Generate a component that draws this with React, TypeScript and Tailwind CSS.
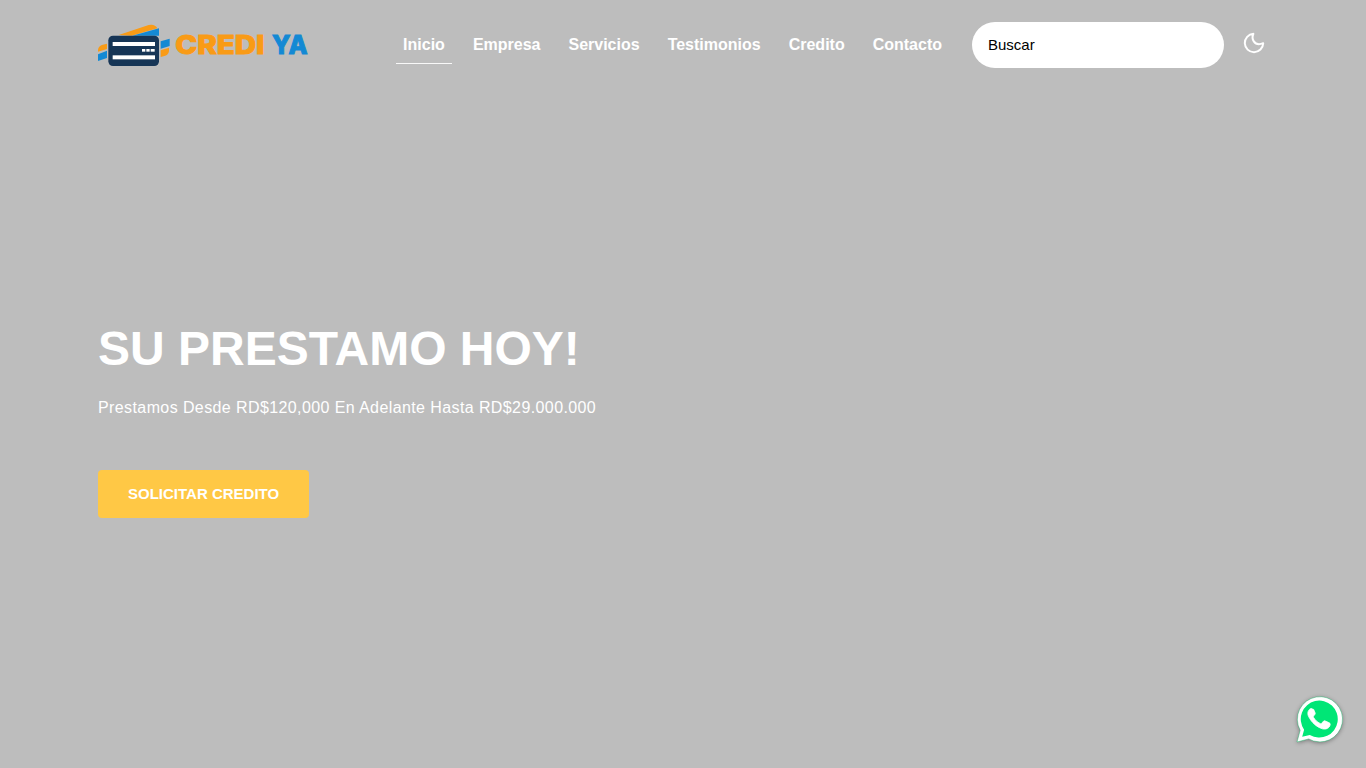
const links = ["Inicio", "Empresa", "Servicios", "Testimonios", "Credito", "Contacto"];

function Logo() {
  return (
    <svg className="w-[220px] h-[43px] shrink-0 overflow-visible" viewBox="24 27 660 129" role="img" aria-label="Credi Ya">
      <g fill="#f99b16">
        <path d="M86 60 L176 30 Q195 26 202 40 L125 62 Z" />
        <path d="M24 110 V104 Q25 93 38 89 L51 86 V102 Z" />
        <path d="M212 106 L237 98 Q239 118 226 122 L212 126 Z" />
      </g>
      <g fill="#1389d4">
        <path d="M127 62 L207 40 V62 Z" />
        <path d="M24 118 L51 107 V129 L24 138 Z" />
        <path d="M212 79 L239 71 V93 L212 101 Z" />
      </g>
      <rect x="55" y="62" width="152" height="91" rx="14" fill="#163556" />
      <g fill="#fff">
        <rect x="68" y="81" width="127" height="12" />
        <rect x="68" y="121" width="127" height="12" />
        <rect x="156" y="102" width="10" height="8" />
        <rect x="169" y="102" width="10" height="8" />
        <rect x="182" y="102" width="12" height="8" />
      </g>
      <g className="font-['Inter',sans-serif] font-extrabold" fontSize="77" strokeWidth="3">
        <text x="256" y="118" textLength="267" lengthAdjust="spacingAndGlyphs" fill="#f99b16" stroke="#f99b16">
          CREDI
        </text>
        <text x="546" y="118" textLength="107" lengthAdjust="spacingAndGlyphs" fill="#1389d4" stroke="#1389d4">
          YA
        </text>
      </g>
    </svg>
  );
}

function Header() {
  return (
    <header className="flex h-[90px] items-center">
      <Logo />
      <nav className="ml-auto flex gap-[14px]">
        {links.map((link, i) => (
          <a
            key={link}
            href="#"
            className={`border-b px-[7px] pt-[7px] pb-[6px] leading-6 font-bold ${
              i === 0 ? "border-white/90" : "border-transparent"
            }`}
          >
            {link}
          </a>
        ))}
      </nav>
      <input
        type="text"
        placeholder="Buscar"
        className="ml-[23px] h-[46px] w-[252px] rounded-full bg-white px-4 pb-[2px] text-[15px] text-black placeholder:text-black"
      />
      <button type="button" aria-label="Modo oscuro" className="mr-[2px] mb-[4px] ml-[18px]">
        <svg className="size-6" viewBox="0 0 24 24" fill="none" stroke="currentColor" strokeWidth="2" strokeLinejoin="round">
          <path d="M11.4 2.8 A9.2 9.2 0 1 0 21.2 12.2 C17 14 13.6 13.1 11.8 10.4 C10.2 8 10.2 5.4 11.4 2.8 Z" />
        </svg>
      </button>
    </header>
  );
}

function WhatsAppButton() {
  return (
    <a href="#" aria-label="WhatsApp" className="fixed right-[22px] bottom-[24px] drop-shadow-[0_1px_2px_rgba(0,0,0,0.35)]">
      <svg className="size-[50px]" viewBox="0 0 50 50">
        <path d="M3 48 L6.2 36.3 A22.6 22.6 0 1 1 14.7 44.9 Z" fill="#fff" stroke="#00b95f" strokeWidth="0.4" />
        <path d="M8.2 42.8 L10.1 35.7 A18.5 18.5 0 1 1 15.8 41 Z" fill="#00e676" />
        <path
          d="M18.3 15 C17.6 14.3 16.6 14.4 15.9 15 C13.5 17 13.3 20 14.7 22.7 C17.7 28.5 22.3 32.8 28.3 34.8 C31.6 35.8 35.5 34.2 36.1 30.9 C36.4 29.5 36 29.2 34.8 28.6 L31.3 27 C30.3 26.5 29.8 26.8 29.2 27.5 L27.8 29.2 C27.3 29.8 26.8 29.8 26 29.4 C23.2 28.1 21.1 26 19.6 23.5 C19.2 22.8 19.3 22.4 19.8 21.8 L20.9 20.4 C21.3 19.9 21.3 19.4 21.1 18.8 L19.7 15.6 C19.4 15 19 14.8 18.3 15 Z"
          fill="#fff"
          stroke="#fff"
          strokeWidth="0.8"
        />
      </svg>
    </a>
  );
}

export default function App() {
  return (
    <div className="min-h-screen bg-[#bdbdbd] font-['Liberation_Sans',Arial,sans-serif] text-white">
      <div className="mx-auto w-[1170px]">
        <Header />
        <main className="flex flex-col items-start pt-[230px]">
          <h1 className="text-5xl leading-[58px] font-bold">SU PRESTAMO HOY!</h1>
          <p className="mt-[18px] leading-6 tracking-[0.4px]">
            Prestamos Desde RD$120,000 En Adelante Hasta RD$29.000.000
          </p>
          <a href="#" className="mt-[50px] rounded bg-[#ffc845] px-[30px] text-[15px] leading-[48px] font-bold">
            SOLICITAR CREDITO
          </a>
        </main>
      </div>
      <WhatsAppButton />
    </div>
  );
}
